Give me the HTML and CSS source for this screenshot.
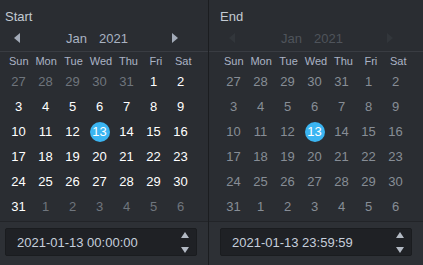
FILE: index.html
```html
<!DOCTYPE html>
<html>
<head>
<meta charset="utf-8">
<link rel="stylesheet" href="styles.css">
</head>
<body>
<div class="picker">
  <section class="panel panel-start">
    <div class="head">
      <div class="label">Start</div>
      <div class="nav">
        <svg class="arrow" width="6" height="10" viewBox="0 0 6 10"><path d="M6 0 L0 5 L6 10 Z"/></svg>
        <div class="title"><span>Jan</span><span>2021</span></div>
        <svg class="arrow" width="6" height="10" viewBox="0 0 6 10"><path d="M0 0 L6 5 L0 10 Z"/></svg>
      </div>
    </div>
    <div class="body">
      <div class="weekdays"><span>Sun</span><span>Mon</span><span>Tue</span><span>Wed</span><span>Thu</span><span>Fri</span><span>Sat</span></div>
      <div class="days">
        <span class="other">27</span><span class="other">28</span><span class="other">29</span><span class="other">30</span><span class="other">31</span><span>1</span><span>2</span>
        <span>3</span><span>4</span><span>5</span><span>6</span><span>7</span><span>8</span><span>9</span>
        <span>10</span><span>11</span><span>12</span><span><b class="sel">13</b></span><span>14</span><span>15</span><span>16</span>
        <span>17</span><span>18</span><span>19</span><span>20</span><span>21</span><span>22</span><span>23</span>
        <span>24</span><span>25</span><span>26</span><span>27</span><span>28</span><span>29</span><span>30</span>
        <span>31</span><span class="other">1</span><span class="other">2</span><span class="other">3</span><span class="other">4</span><span class="other">5</span><span class="other">6</span>
      </div>
    </div>
    <div class="foot">
      <div class="input">
        <span class="value">2021-01-13 00:00:00</span>
        <span class="spin">
          <svg width="8" height="6" viewBox="0 0 8 6"><path d="M4 0 L8 6 L0 6 Z"/></svg>
          <svg width="8" height="6" viewBox="0 0 8 6"><path d="M0 0 L8 0 L4 6 Z"/></svg>
        </span>
      </div>
    </div>
  </section>
  <section class="panel panel-end">
    <div class="head">
      <div class="label">End</div>
      <div class="nav dim">
        <svg class="arrow" width="6" height="10" viewBox="0 0 6 10"><path d="M6 0 L0 5 L6 10 Z"/></svg>
        <div class="title"><span>Jan</span><span>2021</span></div>
        <svg class="arrow" width="6" height="10" viewBox="0 0 6 10"><path d="M0 0 L6 5 L0 10 Z"/></svg>
      </div>
    </div>
    <div class="body">
      <div class="weekdays"><span>Sun</span><span>Mon</span><span>Tue</span><span>Wed</span><span>Thu</span><span>Fri</span><span>Sat</span></div>
      <div class="days muted">
        <span>27</span><span>28</span><span>29</span><span>30</span><span>31</span><span>1</span><span>2</span>
        <span>3</span><span>4</span><span>5</span><span>6</span><span>7</span><span>8</span><span>9</span>
        <span>10</span><span>11</span><span>12</span><span><b class="sel">13</b></span><span>14</span><span>15</span><span>16</span>
        <span>17</span><span>18</span><span>19</span><span>20</span><span>21</span><span>22</span><span>23</span>
        <span>24</span><span>25</span><span>26</span><span>27</span><span>28</span><span>29</span><span>30</span>
        <span>31</span><span>1</span><span>2</span><span>3</span><span>4</span><span>5</span><span>6</span>
      </div>
    </div>
    <div class="foot">
      <div class="input">
        <span class="value">2021-01-13 23:59:59</span>
        <span class="spin">
          <svg width="8" height="6" viewBox="0 0 8 6"><path d="M4 0 L8 6 L0 6 Z"/></svg>
          <svg width="8" height="6" viewBox="0 0 8 6"><path d="M0 0 L8 0 L4 6 Z"/></svg>
        </span>
      </div>
    </div>
  </section>
</div>
</body>
</html>
```

FILE: styles.css
```css
html, body {
  margin: 0;
  padding: 0;
  background: #2a2d32;
}
body {
  font-family: "Liberation Sans", Arial, sans-serif;
  font-size: 13px;
  color: #ffffff;
  width: 423px;
  height: 265px;
  overflow: hidden;
}
.picker {
  display: flex;
  height: 265px;
}
.panel {
  display: flex;
  flex-direction: column;
  box-sizing: border-box;
}
.panel-start {
  width: 209px;
  border-right: 1px solid #1b1d20;
  --pl: 5px;
}
.panel-end {
  flex: 1;
  --pl: 11px;
}
.head {
  padding: 9px 11px 0 var(--pl);
  height: 51px;
  box-sizing: border-box;
  border-bottom: 1px solid #393c42;
  height: 52px;
}
.label {
  height: 16px;
  line-height: 16px;
  color: #c3cad3;
  font-size: 13px;
}
.nav {
  height: 26px;
  display: flex;
  align-items: center;
  justify-content: space-between;
  padding: 0 9px;
  margin-right: 10px;
  fill: #a3abb8;
}
.nav .title {
  display: flex;
  gap: 12px;
  color: #a9b3c2;
  font-size: 13px;
  padding-left: 2px;
}
.nav.dim {
  fill: #32363b;
}
.nav.dim .title {
  color: #4f545b;
}
.body {
  flex: 1;
  padding: 0 11px 0 var(--pl);
}
.weekdays {
  display: grid;
  grid-template-columns: repeat(7, 1fr);
  height: 17px;
  align-items: center;
  text-align: center;
  font-size: 11px;
  color: #aab3c5;
}
.days {
  display: grid;
  grid-template-columns: repeat(7, 27px);
  grid-auto-rows: 25px;
}
.days span {
  display: flex;
  align-items: center;
  justify-content: center;
  color: #ffffff;
}
.days span.other {
  color: #6f757d;
}
.days.muted span {
  color: #878d96;
}
.days .sel {
  font-weight: normal;
  width: 20px;
  height: 20px;
  border-radius: 50%;
  background: #3bb5f2;
  color: #ffffff;
  display: flex;
  align-items: center;
  justify-content: center;
}
.foot {
  border-top: 1px solid #222428;
  background: #2d3035;
  padding: 6px 11px 9px var(--pl);
}
.input {
  height: 28px;
  box-sizing: border-box;
  border: 1px solid #1a1c1f;
  border-radius: 2px;
  background: #1f2125;
  display: flex;
  align-items: center;
  justify-content: space-between;
  padding: 0 7px 0 11px;
}
.input .value {
  color: #c6cfdc;
  font-size: 13px;
}
.spin {
  display: flex;
  flex-direction: column;
  gap: 9px;
  fill: #b3bac4;
}
.spin svg {
  display: block;
}
```
